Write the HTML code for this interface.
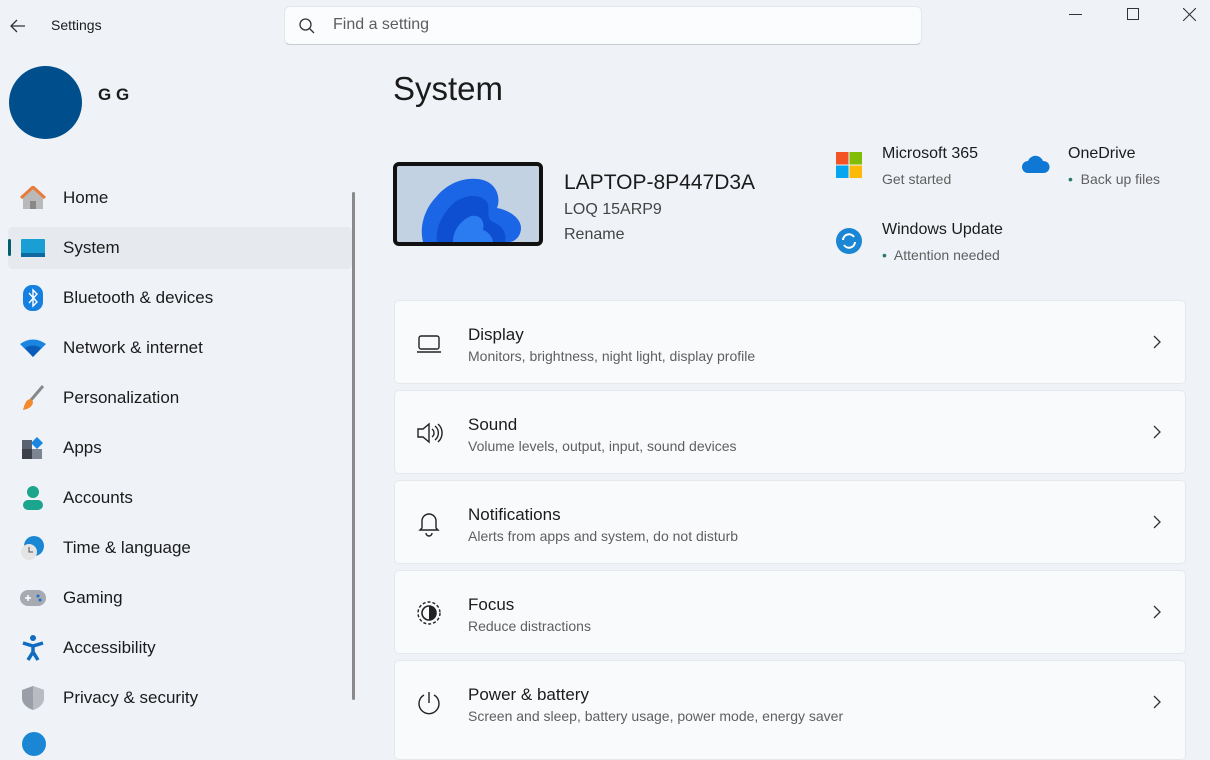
<!DOCTYPE html>
<html><head><meta charset="utf-8"><style>
*{margin:0;padding:0;box-sizing:border-box}
body{width:1210px;height:740px;overflow:hidden;background:#eff3f8;font-family:"Liberation Sans",sans-serif;color:#1b1b1b;position:relative}
.abs{position:absolute}
.nav{position:absolute;left:8px;width:344px;height:42px;display:flex;align-items:center;font-size:17px}
.nav .ic{width:26px;height:26px;margin-left:12px;margin-right:17px;display:flex;align-items:center;justify-content:center}
.card{position:absolute;left:394px;width:792px;height:84px;background:#f9fafc;border:1px solid #e5e8ec;border-radius:5px}
.card .t{position:absolute;left:73px;top:24px;font-size:17px;color:#1b1b1b}
.card .s{position:absolute;left:73px;top:47px;font-size:14px;color:#5f5f5f}
.card .i{position:absolute;left:20px;top:28px;width:28px;height:28px}
.card .ch{position:absolute;right:24px;top:34px}
</style></head><body>
<svg class="abs" style="left:9px;top:18px" width="18" height="16" viewBox="0 0 18 16"><path d="M16 8H2M8 2L2 8l6 6" fill="none" stroke="#333" stroke-width="1.3"/></svg>
<div class="abs" style="left:51px;top:17px;font-size:14px">Settings</div>
<div class="abs" style="left:284px;top:6px;width:638px;height:39px;background:#fbfcfd;border:1px solid #e3e6ea;border-bottom-color:#c8ccd0;border-radius:6px"></div>
<svg class="abs" style="left:298px;top:17px" width="18" height="18" viewBox="0 0 18 18"><circle cx="7.5" cy="7.5" r="5.5" fill="none" stroke="#333" stroke-width="1.3"/><path d="M11.5 11.5L16 16" stroke="#333" stroke-width="1.3"/></svg>
<div class="abs" style="left:333px;top:16px;font-size:16px;color:#5d5d5d">Find a setting</div>
<div class="abs" style="left:1069px;top:14px;width:13px;height:1px;background:#333"></div>
<div class="abs" style="left:1127px;top:8px;width:12px;height:12px;border:1px solid #333"></div>
<svg class="abs" style="left:1183px;top:8px" width="13" height="13"><path d="M0 0L13 13M13 0L0 13" stroke="#333" stroke-width="1.1"/></svg>
<div class="abs" style="left:9px;top:66px;width:73px;height:73px;border-radius:50%;background:#004e8c"></div>
<div class="abs" style="left:98px;top:85px;font-size:17px;font-weight:bold">G G</div>
<div class="abs" style="left:352px;top:192px;width:3px;height:508px;background:#8a8a8a;border-radius:2px"></div>

<div class="nav" style="top:177px"><div class="ic"><svg width="26" height="24" viewBox="0 0 26 24"><path d="M3 11L13 2l10 9v12H3z" fill="#b9b9b9"/><path d="M1 12L13 1l12 11" fill="none" stroke="#e87a3a" stroke-width="3"/><rect x="10" y="15" width="6" height="8" fill="#888"/></svg></div>Home</div>
<div class="nav" style="top:227px;background:#e6eaef;border-radius:5px"><div class="abs" style="left:0;top:12px;width:3px;height:17px;background:#005f6b;border-radius:2px"></div><div class="ic"><svg width="24" height="18"><rect width="24" height="18" rx="1" fill="#1a9fd4"/><rect y="14" width="24" height="4" fill="#0c6aa0"/></svg></div>System</div>
<div class="nav" style="top:277px"><div class="ic"><svg width="20" height="26"><rect width="20" height="26" rx="9" fill="#1680e0"/><path d="M6 8l8 9-4 4V5l4 4-8 9" fill="none" stroke="#fff" stroke-width="1.4"/></svg></div>Bluetooth &amp; devices</div>
<div class="nav" style="top:327px"><div class="ic"><svg width="26" height="18" viewBox="0 0 26 18"><path d="M0 5Q13-4 26 5L13 18z" fill="#1a86e0"/><path d="M5 9Q13 4 21 9L13 18z" fill="#0a5cb8"/></svg></div>Network &amp; internet</div>
<div class="nav" style="top:377px"><div class="ic"><svg width="24" height="26"><path d="M22 1L10 15" stroke="#888" stroke-width="3"/><path d="M10 14c-4 0-6 3-8 11 6-1 10-4 10-8z" fill="#f08a2c"/></svg></div>Personalization</div>
<div class="nav" style="top:427px"><div class="ic"><svg width="24" height="22"><rect x="1" y="3" width="10" height="9" fill="#5a6270"/><rect x="1" y="12" width="10" height="10" fill="#3b404a"/><rect x="11" y="12" width="10" height="10" fill="#7d8592"/><path d="M16 0l6 6-6 6-6-6z" fill="#1a86e0"/></svg></div>Apps</div>
<div class="nav" style="top:477px"><div class="ic"><svg width="22" height="24"><circle cx="11" cy="6" r="6" fill="#1aa58c"/><rect x="1" y="14" width="20" height="10" rx="5" fill="#1aa58c"/></svg></div>Accounts</div>
<div class="nav" style="top:527px"><div class="ic"><svg width="26" height="26"><circle cx="14" cy="11" r="10" fill="#1a86d4"/><circle cx="9" cy="17" r="8" fill="#e4e4e4"/><path d="M9 12v5h4" stroke="#555" fill="none"/></svg></div>Time &amp; language</div>
<div class="nav" style="top:577px"><div class="ic"><svg width="26" height="16"><rect width="26" height="16" rx="8" fill="#a7aab0"/><path d="M5 8h6M8 5v6" stroke="#fff" stroke-width="1.5"/><circle cx="18" cy="6" r="1.5" fill="#1a6fd0"/><circle cx="20" cy="10" r="1.5" fill="#1a6fd0"/></svg></div>Gaming</div>
<div class="nav" style="top:627px"><div class="ic"><svg width="22" height="26"><circle cx="11" cy="3" r="3" fill="#0f6cc0"/><path d="M1 8l10 3 10-3M11 11v6l-5 8M11 17l5 8" stroke="#0f6cc0" stroke-width="3.5" fill="none"/></svg></div>Accessibility</div>
<div class="nav" style="top:677px"><div class="ic"><svg width="22" height="24"><path d="M11 0L22 4v8c0 6-5 10-11 12C5 22 0 18 0 12V4z" fill="#9a9ea6"/><path d="M11 0L22 4v8c0 6-5 10-11 12z" fill="#b8bcc2"/></svg></div>Privacy &amp; security</div>
<div class="abs" style="left:22px;top:732px;width:24px;height:24px;border-radius:50%;background:#1a86d4"></div>

<div class="abs" style="left:393px;top:70px;font-size:33px;font-weight:500">System</div>
<div class="abs" style="left:393px;top:162px;width:150px;height:84px;background:#111;border-radius:6px;padding:4px"><svg width="142" height="76" viewBox="0 0 142 76" style="display:block;border-radius:2px"><rect width="142" height="76" fill="#c3d2e2"/><path d="M26 76C22 60 28 42 40 30 52 16 70 10 86 14 100 18 104 32 100 42 112 44 124 52 124 62 124 70 118 76 112 76z" fill="#1a66e6"/><path d="M40 76C38 62 46 46 58 36 70 28 84 28 90 36 94 44 88 52 96 56 106 60 110 68 108 76z" fill="#0e4ed0"/><path d="M56 76C56 64 64 54 74 50 84 48 88 56 86 64 92 66 96 72 96 76z" fill="#2a7cf0"/></svg></div>
<div class="abs" style="left:564px;top:171px;font-size:21px;font-weight:500">LAPTOP-8P447D3A</div>
<div class="abs" style="left:564px;top:201px;font-size:16px;color:#444">LOQ 15ARP9</div>
<div class="abs" style="left:564px;top:226px;font-size:16px;color:#444">Rename</div>

<svg class="abs" style="left:836px;top:152px" width="26" height="26"><rect width="12.5" height="12.5" fill="#f35325"/><rect x="13.5" width="12.5" height="12.5" fill="#81bc06"/><rect y="13.5" width="12.5" height="12.5" fill="#05a6f0"/><rect x="13.5" y="13.5" width="12.5" height="12.5" fill="#ffba08"/></svg>
<div class="abs" style="left:882px;top:145px;font-size:16px;font-weight:500">Microsoft 365</div>
<div class="abs" style="left:882px;top:171px;font-size:14px;color:#5f5f5f">Get started</div>
<svg class="abs" style="left:1022px;top:155px" width="28" height="18"><path d="M6 18a6 6 0 010-12 8 8 0 0115 0 5 5 0 011 12z" fill="#0f78d4"/></svg>
<div class="abs" style="left:1068px;top:145px;font-size:16px;font-weight:500">OneDrive</div>
<div class="abs" style="left:1068px;top:171px;font-size:14px;color:#5f5f5f"><span style="color:#2b7a6a">•</span>&nbsp; Back up files</div>
<svg class="abs" style="left:836px;top:228px" width="26" height="26"><circle cx="13" cy="13" r="13" fill="#1a86d4"/><path d="M7 12a6 6 0 0111-3M19 14a6 6 0 01-11 3" stroke="#fff" stroke-width="2" fill="none"/></svg>
<div class="abs" style="left:882px;top:221px;font-size:16px;font-weight:500">Windows Update</div>
<div class="abs" style="left:882px;top:247px;font-size:14px;color:#5f5f5f"><span style="color:#2b7a6a">•</span>&nbsp; Attention needed</div>

<div class="card" style="top:300px"><svg class="i" viewBox="0 0 28 28"><rect x="4" y="7" width="20" height="13" rx="2" fill="none" stroke="#222" stroke-width="1.4"/><path d="M2 23h24" stroke="#222" stroke-width="1.4"/></svg><div class="t">Display</div><div class="s">Monitors, brightness, night light, display profile</div><svg class="ch" width="8" height="14"><path d="M1 1l6 6-6 6" fill="none" stroke="#333" stroke-width="1.3"/></svg></div>
<div class="card" style="top:390px"><svg class="i" viewBox="0 0 28 28"><path d="M3 10h5l6-5v18l-6-5H3z" fill="none" stroke="#222" stroke-width="1.4"/><path d="M17 10a5 5 0 010 8M20 7a9 9 0 010 14M23 5a12 12 0 010 18" fill="none" stroke="#222" stroke-width="1.4"/></svg><div class="t">Sound</div><div class="s">Volume levels, output, input, sound devices</div><svg class="ch" width="8" height="14"><path d="M1 1l6 6-6 6" fill="none" stroke="#333" stroke-width="1.3"/></svg></div>
<div class="card" style="top:480px"><svg class="i" viewBox="0 0 28 28"><path d="M7 19V12a7 7 0 0114 0v7l2 2H5z" fill="none" stroke="#222" stroke-width="1.4"/><path d="M11 24a3 3 0 006 0" fill="none" stroke="#222" stroke-width="1.4"/></svg><div class="t">Notifications</div><div class="s">Alerts from apps and system, do not disturb</div><svg class="ch" width="8" height="14"><path d="M1 1l6 6-6 6" fill="none" stroke="#333" stroke-width="1.3"/></svg></div>
<div class="card" style="top:570px"><svg class="i" viewBox="0 0 28 28"><circle cx="14" cy="14" r="11" fill="none" stroke="#222" stroke-width="1.4" stroke-dasharray="3 2"/><circle cx="14" cy="14" r="7" fill="none" stroke="#222" stroke-width="1.6"/><path d="M14 7a7 7 0 010 14z" fill="#222"/></svg><div class="t">Focus</div><div class="s">Reduce distractions</div><svg class="ch" width="8" height="14"><path d="M1 1l6 6-6 6" fill="none" stroke="#333" stroke-width="1.3"/></svg></div>
<div class="card" style="top:660px;height:100px"><svg class="i" viewBox="0 0 28 28"><path d="M14 3v11" stroke="#222" stroke-width="1.4"/><path d="M9 6a10 10 0 1010 0" fill="none" stroke="#222" stroke-width="1.4"/></svg><div class="t">Power &amp; battery</div><div class="s">Screen and sleep, battery usage, power mode, energy saver</div><svg class="ch" width="8" height="14"><path d="M1 1l6 6-6 6" fill="none" stroke="#333" stroke-width="1.3"/></svg></div>
</body></html>
